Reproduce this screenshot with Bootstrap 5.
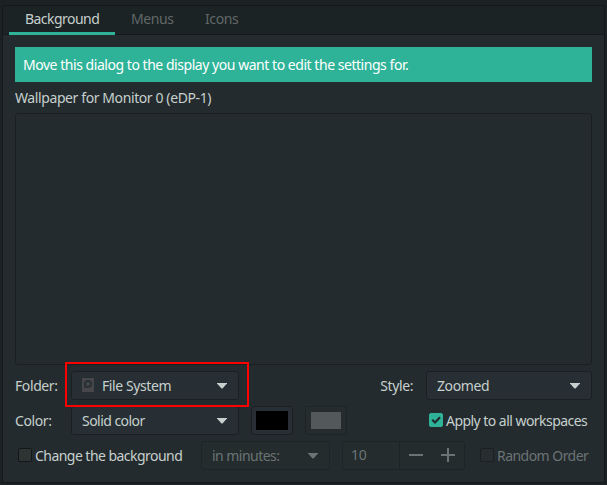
<!DOCTYPE html>
<html lang="en">
<head>
<meta charset="utf-8">
<meta name="viewport" content="width=device-width, initial-scale=1">
<title>Desktop</title>
<link rel="stylesheet" href="https://cdn.jsdelivr.net/npm/bootstrap@5.3.0/dist/css/bootstrap.min.css">
<style>
body{background:#1b2224;color:#c6d0cd;font-family:"Noto Sans",sans-serif;font-size:14px;line-height:18px;overflow:hidden;height:485px;padding:5px 2px 0}
.frame{width:603px;height:478px;background:#242b2e;border:1px solid #14191b;border-radius:2px 2px 0 0}
.tabs{height:29px;background:#1c2325;border-bottom:1px solid #14191b;padding-left:6px}
.tabs .nav-link{color:#606868;padding:4px 16px 0;height:29px;line-height:18px}
.tabs .nav-link.active{color:#c6d0cd;border-bottom:3px solid #2eb398}
.tabs .nav-item:nth-child(1){width:106px}
.tabs .nav-item:nth-child(2){width:74px}
.banner{height:35px;margin-top:12px;background:#2eb398;color:#fff;padding:0 8px}
.caption{margin-top:7px;height:18px}
.preview{margin-top:6px;height:252px;border:1px solid #1a2022;border-radius:3px}
.page{padding:0 12px}
.line{height:29px;margin-top:6px}
.lbl{width:56px}
.pick,.color-btn,.spin{height:29px;border:1px solid #1a2022;border-radius:3px;background:#272f34;color:#c6d0cd;font-size:inherit;line-height:18px}
.pick{padding:0 11px 0 10px}
.wide{width:168px}
.style-pick{width:166px;margin-left:13px}
.unit{width:129px}
.color-btn{width:42px;margin-left:12px;padding:0}
.swatch{width:32px;height:19px;background:#000}
.dim,.pick.dim{color:#6b7474}
.off{background:#242c2e!important;border-color:#1d2426!important}
.off .swatch{width:30px;height:17px;background:#53585a}
.spin{width:123px;margin-left:12px}
.spin-val{width:57px;padding-left:8px;height:27px;line-height:26px;border-right:1px solid #1d2426;letter-spacing:-.2px}
.box{width:14px;height:14px;border:1px solid #121718;border-radius:2px;background:#2d3534;flex:none;margin:0 3px 1px 0}
.box.on{background:#2eb398;border-color:#2eb398}
.dim .box{background:#262e30;border-color:#1a2022}
.change{width:186px;padding-left:3px}
.apply{width:163px}
.rand{margin-left:15px}
.mark-red{position:absolute;left:65px;top:362px;width:184px;height:45px;border:2px solid #f00;pointer-events:none}
svg{display:block;flex:none}
.disk{margin-bottom:2px}
.t{display:inline-block;white-space:nowrap;letter-spacing:-.4px}
.t.snug{letter-spacing:-.46px}
.t.tight{letter-spacing:-.54px}
</style>
</head>
<body>
<main class="frame">
  <ul class="nav tabs flex-nowrap">
    <li class="nav-item"><a class="nav-link active"><span class="t tight">Background</span></a></li>
    <li class="nav-item"><a class="nav-link"><span class="t">Menus</span></a></li>
    <li class="nav-item"><a class="nav-link"><span class="t">Icons</span></a></li>
  </ul>
  <div class="page">
    <div class="banner d-flex align-items-center"><span class="t snug">Move this dialog to the display you want to edit the settings for.</span></div>
    <div class="caption"><span class="t">Wallpaper for Monitor 0 (eDP-1)</span></div>
    <div class="preview"></div>
    <div class="line d-flex align-items-center">
      <span class="lbl"><span class="t">Folder:</span></span>
      <button class="pick wide d-flex align-items-center">
        <svg class="disk" width="12" height="14" viewBox="0 0 12 14"><path fill="#474648" d="M0 0h12v14H0z"/><path fill="#293136" d="M2 10V6a4 4 0 1 1 4 4z"/><circle cx="6" cy="6" r="2" fill="#474648"/></svg>
        <span class="t ms-2">File System</span>
        <svg class="ms-auto" width="10" height="6" viewBox="0 0 10 6"><path fill="currentColor" d="M0 0h10v.5L5.500 5.500h-1L0 .5z"/></svg>
      </button>
      <span class="t ms-auto">Style:</span>
      <button class="pick style-pick d-flex align-items-center">
        <span class="t">Zoomed</span>
        <svg class="ms-auto" width="10" height="6" viewBox="0 0 10 6"><path fill="currentColor" d="M0 0h10v.5L5.500 5.500h-1L0 .5z"/></svg>
      </button>
    </div>
    <div class="line d-flex align-items-center">
      <span class="lbl"><span class="t">Color:</span></span>
      <button class="pick wide d-flex align-items-center">
        <span class="t tight">Solid color</span>
        <svg class="ms-auto" width="10" height="6" viewBox="0 0 10 6"><path fill="currentColor" d="M0 0h10v.5L5.500 5.500h-1L0 .5z"/></svg>
      </button>
      <button class="color-btn d-flex align-items-center justify-content-center" aria-label="First color"><span class="swatch"></span></button>
      <button class="color-btn off d-flex align-items-center justify-content-center" aria-label="Second color" disabled><span class="swatch"></span></button>
      <div class="d-flex align-items-center ms-auto apply">
        <span class="box on"><svg width="12" height="12" viewBox="0 0 12 12"><path d="M2.200 5.800 5 8.500 10 3.300" fill="none" stroke="#1f292b" stroke-width="2.200"/></svg></span>
        <span class="t tight">Apply to all workspaces</span>
      </div>
    </div>
    <div class="line d-flex align-items-center">
      <div class="change d-flex align-items-center">
        <span class="box"></span>
        <span class="t tight">Change the background</span>
      </div>
      <button class="pick unit dim off d-flex align-items-center" disabled>
        <span class="t tight">in minutes:</span>
        <svg class="ms-auto" width="10" height="6" viewBox="0 0 10 6"><path fill="currentColor" d="M0 0h10v.5L5.500 5.500h-1L0 .5z"/></svg>
      </button>
      <div class="spin off dim d-flex align-items-center">
        <span class="spin-val">10</span>
        <svg width="64" height="27" viewBox="1 0 64 27"><path d="M10 13h14M42 13h14M49 6v14" fill="none" stroke="currentColor" stroke-width="2"/></svg>
      </div>
      <div class="d-flex align-items-center dim rand">
        <span class="box"></span>
        <span class="t tight">Random Order</span>
      </div>
    </div>
  </div>
</main>
<div class="mark-red"></div>
<script src="https://cdn.jsdelivr.net/npm/bootstrap@5.3.0/dist/js/bootstrap.bundle.min.js"></script>
</body>
</html>
